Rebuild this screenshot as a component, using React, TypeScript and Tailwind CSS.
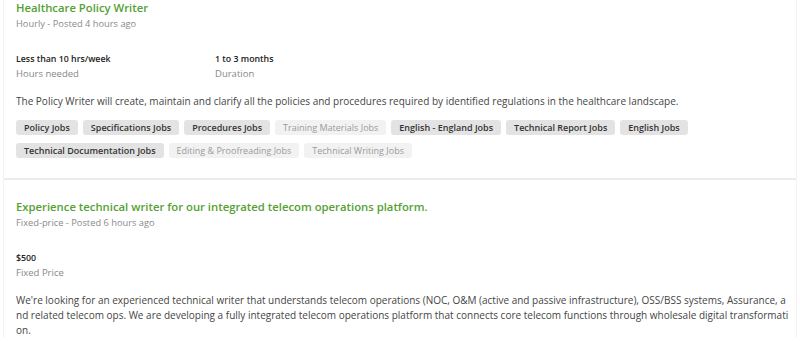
import React from 'react';

interface Tag {
  label: string;
  strong: boolean;
}

interface Job {
  title: string;
  meta: string;
  stats: { value: string; label: string }[];
  description: string;
  tags: Tag[];
}

const jobs: Job[] = [
  {
    title: 'Healthcare Policy Writer',
    meta: 'Hourly - Posted 4 hours ago',
    stats: [
      { value: 'Less than 10 hrs/week', label: 'Hours needed' },
      { value: '1 to 3 months', label: 'Duration' },
    ],
    description:
      'The Policy Writer will create, maintain and clarify all the policies and procedures required by identified regulations in the healthcare landscape.',
    tags: [
      { label: 'Policy Jobs', strong: true },
      { label: 'Specifications Jobs', strong: true },
      { label: 'Procedures Jobs', strong: true },
      { label: 'Training Materials Jobs', strong: false },
      { label: 'English - England Jobs', strong: true },
      { label: 'Technical Report Jobs', strong: true },
      { label: 'English Jobs', strong: true },
      { label: 'Technical Documentation Jobs', strong: true },
      { label: 'Editing & Proofreading Jobs', strong: false },
      { label: 'Technical Writing Jobs', strong: false },
    ],
  },
  {
    title: 'Experience technical writer for our integrated telecom operations platform.',
    meta: 'Fixed-price - Posted 6 hours ago',
    stats: [{ value: '$500', label: 'Fixed Price' }],
    description:
      "We're looking for an experienced technical writer that understands telecom operations (NOC, O&M (active and passive infrastructure), OSS/BSS systems, Assurance, and related telecom ops. We are developing a fully integrated telecom operations platform that connects core telecom functions through wholesale digital transformation.",
    tags: [],
  },
];

const JobCard: React.FC<{ job: Job; first: boolean }> = ({ job, first }) => (
  <section className={`pl-3 pr-[6px] ${first ? 'pt-0 pb-5 border-b-2 border-[#ececec]' : 'pt-[19px]'}`}>
    <h2 className="text-[11.3px] leading-[16px] font-semibold text-[#55a133]">{job.title}</h2>
    <p className="text-[9.3px] leading-[15px] text-[#8a8a8a]">{job.meta}</p>

    <div className="mt-[21px] flex">
      {job.stats.map((s) => (
        <div key={s.label} className="w-[199px]">
          <div className="text-[8.8px] leading-[14px] font-semibold text-[#222]">{s.value}</div>
          <div className="text-[9.5px] leading-[16px] text-[#888]">{s.label}</div>
        </div>
      ))}
    </div>

    <p className="mt-[12px] text-[10px] leading-[15px] text-[#454545] break-all">{job.description}</p>

    {job.tags.length > 0 && (
      <div className="mt-[11px] pr-[6px] flex flex-wrap gap-x-[5px] gap-y-[8px]">
        {job.tags.map((t) => (
          <span
            key={t.label}
            className={`px-[8px] h-[15px] flex items-center rounded-[3px] text-[9px] ${
              t.strong ? 'bg-[#e3e3e3] text-[#333] font-semibold' : 'bg-[#f2f2f2] text-[#9a9a9a]'
            }`}
          >
            {t.label}
          </span>
        ))}
      </div>
    )}
  </section>
);

export default function App() {
  return (
    <div className="w-[800px] h-[345px] overflow-hidden bg-white" style={{ fontFamily: '"Open Sans", sans-serif' }}>
      <div className="mx-[3px] border-x border-[#f3f3f3]">
        {jobs.map((job, i) => (
          <JobCard key={job.title} job={job} first={i === 0} />
        ))}
      </div>
    </div>
  );
}
